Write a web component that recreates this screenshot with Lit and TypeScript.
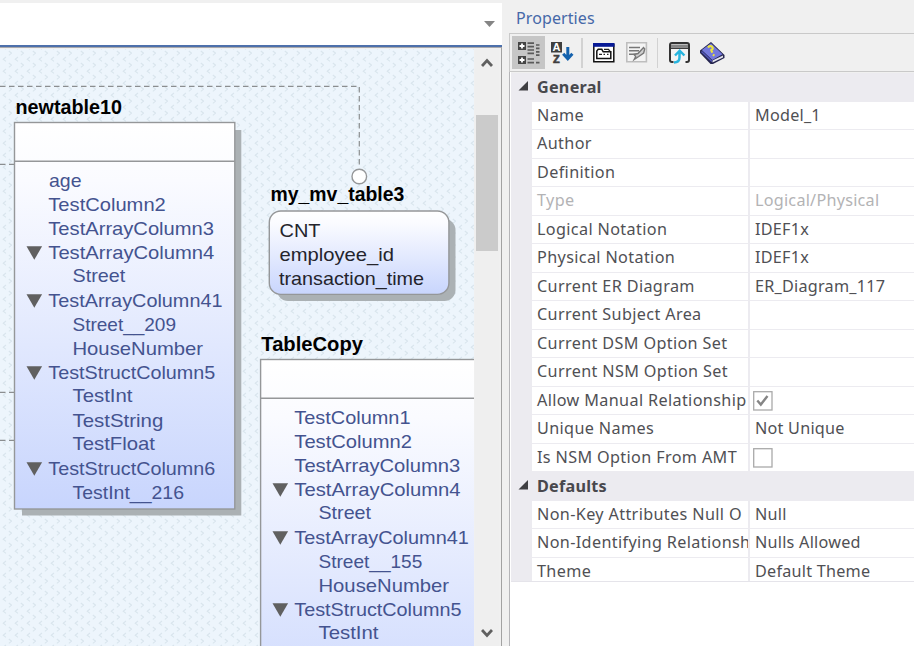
import { LitElement, html, svg, css, nothing } from "lit";
import { customElement, property } from "lit/decorators.js";

type Line = { text: string; x: number; y: number; end: number; open?: boolean };

const col = (text: string, x: number, y: number, end: number, open = false): Line => ({ text, x, y, end, open });

const newTable: Line[] = [
  col("age", 49, 186.5, 81.5),
  col("TestColumn2", 48.3, 211.2, 165.8),
  col("TestArrayColumn3", 48.3, 235.3, 214),
  col("TestArrayColumn4", 48.3, 259.3, 214.3, true),
  col("Street", 72.5, 281.8, 125.2),
  col("TestArrayColumn41", 48.3, 307.3, 222.5, true),
  col("Street__209", 72.5, 331, 176),
  col("HouseNumber", 72.5, 355.3, 203),
  col("TestStructColumn5", 48.3, 379.3, 215.3, true),
  col("TestInt", 72.5, 401.8, 132.5),
  col("TestString", 72.5, 427.3, 163.3),
  col("TestFloat", 72.5, 449.8, 155),
  col("TestStructColumn6", 48.3, 475.3, 215.3, true),
  col("TestInt__216", 72.5, 499.3, 184),
];

const tableCopy: Line[] = [
  col("TestColumn1", 294.3, 424.3, 410.5),
  col("TestColumn2", 294.3, 448.3, 412),
  col("TestArrayColumn3", 294.3, 472.3, 460.3),
  col("TestArrayColumn4", 294.3, 496.3, 460.6, true),
  col("Street", 318.5, 518.8, 371),
  col("TestArrayColumn41", 294.3, 544.3, 468.8, true),
  col("Street__155", 318.5, 568, 422.3),
  col("HouseNumber", 318.5, 592.3, 449),
  col("TestStructColumn5", 294.3, 616.3, 461.5, true),
  col("TestInt", 318.5, 638.8, 378.5),
];

const viewColumns: Line[] = [
  col("CNT", 279.5, 237, 320.5),
  col("employee_id", 279.5, 261.3, 394),
  col("transaction_time", 279, 285, 424),
];

@customElement("er-canvas")
class ErCanvas extends LitElement {
  static styles = css`
    :host { display: block; overflow: hidden; }
    svg { display: block; }
    text { font-family: "Liberation Sans", Arial, sans-serif; font-size: 19px; fill: #44538f; }
    .title { fill: #000; font-weight: bold; font-size: 19.5px; }
    .view { fill: #24242c; }
    .frame { fill: none; stroke: #959799; stroke-width: 1.4; }
    .filled { fill: url(#fill); }
    .white { fill: #fff; }
    .shadow { fill: #abb1b4; }
    .link { fill: none; stroke: #8b8e90; stroke-width: 1.2; stroke-dasharray: 5.5 3.5; }
    .arrow { fill: #606060; }
    .chevron { fill: none; stroke: #d9e5ed; stroke-width: 1.1; }
  `;

  line(l: Line, cls = "") {
    return svg`
      ${l.open ? svg`<path class="arrow" d="M${l.x - 21.8} ${l.y - 13}h15.6l-7.8 13.5z"/>` : nothing}
      <text class=${cls} x=${l.x} y=${l.y} textLength=${l.end - l.x} lengthAdjust="spacingAndGlyphs">${l.text}</text>`;
  }

  render() {
    return html`<svg width="474" height="597" viewBox="0 49 474 597">
      <defs>
        <pattern id="weave" width="12" height="12" patternUnits="userSpaceOnUse">
          <path class="chevron" d="M8.8 3l2.800 2.200l-2.800 2.200M6 9l-2.800 2.200l2.800 2.200M6 -3l-2.800 2.200l2.800 2.200"/>
        </pattern>
        <linearGradient id="fill" x1="0" y1="0" x2="0" y2="1">
          <stop offset="0" stop-color="#ffffff"/><stop offset=".15" stop-color="#fafbff"/><stop offset="1" stop-color="#c8d5fd"/>
        </linearGradient>
      </defs>
      <rect y="49" width="474" height="597" fill="#edf5fc"/>
      <rect y="49" width="474" height="597" fill="url(#weave)"/>
      <path class="link" d="M0 86.3H359.3V168M0 164.3H14M0 392.3H14M0 440.3H14"/>
      <circle class="frame white" cx="359.3" cy="176.5" r="7.3"/>

      <rect class="shadow" x="22" y="130" width="219.3" height="385.5"/>
      <rect class="frame filled" x="14.5" y="122.5" width="220.3" height="386.5"/>
      <path class="frame" d="M14.5 161.2H234.8"/>
      ${this.line(col("newtable10", 15.5, 114, 122), "title")}
      ${newTable.map((l) => this.line(l))}

      <rect class="shadow" x="277" y="219" width="178.5" height="82" rx="11"/>
      <rect class="frame filled" x="269.3" y="211" width="179.6" height="83.4" rx="11.5"/>
      ${this.line(col("my_mv_table3", 270.5, 200.8, 404.3), "title")}
      ${viewColumns.map((l) => this.line(l, "view"))}

      <rect class="frame filled" x="260.6" y="359.5" width="220" height="386"/>
      <path class="frame" d="M260.6 398.3H480"/>
      ${this.line(col("TableCopy", 261.3, 350.8, 363), "title")}
      ${tableCopy.map((l) => this.line(l))}
    </svg>`;
  }
}

type Prop = { name: string; value?: string; check?: boolean; dim?: boolean };

const general: Prop[] = [
  { name: "Name", value: "Model_1" },
  { name: "Author" },
  { name: "Definition" },
  { name: "Type", value: "Logical/Physical", dim: true },
  { name: "Logical Notation", value: "IDEF1x" },
  { name: "Physical Notation", value: "IDEF1x" },
  { name: "Current ER Diagram", value: "ER_Diagram_117" },
  { name: "Current Subject Area" },
  { name: "Current DSM Option Set" },
  { name: "Current NSM Option Set" },
  { name: "Allow Manual Relationship", check: true },
  { name: "Unique Names", value: "Not Unique" },
  { name: "Is NSM Option From AMT", check: false },
];

const defaults: Prop[] = [
  { name: "Non-Key Attributes Null O", value: "Null" },
  { name: "Non-Identifying Relationsh", value: "Nulls Allowed" },
  { name: "Theme", value: "Default Theme" },
];

@customElement("property-group")
class PropertyGroup extends LitElement {
  @property() label = "";
  @property({ attribute: false }) items: Prop[] = [];

  static styles = css`
    :host { display: block; font: 16.2px/28.5px "Noto Sans", "Open Sans", sans-serif; color: #505054; letter-spacing: 0.24px; }
    .head { display: flex; height: 28.5px; background: #ecebf0; font-weight: 700; color: #48484d; }
    .mark { width: 26px; height: 28.5px; flex: none; }
    .row { display: grid; grid-template-columns: 216px 1fr; column-gap: 2px; height: 28.5px; padding-left: 21px; background: #ecebf0; }
    .cell { background: #fff; border-bottom: 1.5px solid #ecebf0; box-sizing: border-box; height: 28.5px; padding-left: 5px; overflow: hidden; white-space: nowrap; line-height: 27.5px; }
    .name { letter-spacing: 0.36px; }
    .dim { color: #b3b3b5; }
    .box { display: block; margin: 4px 0 0 -2px; }
  `;

  render() {
    return html`
      <div class="head">
        <svg class="mark" viewBox="0 0 26 28.5"><path d="M7.5 17.5h9.500v-9.500z" fill="#3f3f42"/></svg>
        <span>${this.label}</span>
      </div>
      ${this.items.map((p) => html`
        <div class="row ${p.dim ? "dim" : ""}">
          <div class="cell name">${p.name}</div>
          <div class="cell">${p.check === undefined ? p.value ?? nothing : html`
            <svg class="box" width="20" height="20" viewBox="0 0 20 20">
              <rect x=".7" y=".7" width="18.300" height="18.300" fill="#fff" stroke="#aaa" stroke-width="1.300"/>
              ${p.check ? svg`<path d="M4.300 9.500l3.500 4l6.700-8.500" fill="none" stroke="#858585" stroke-width="2.400"/>` : nothing}
            </svg>`}</div>
        </div>`)}
    `;
  }
}

@customElement("property-toolbar")
class PropertyToolbar extends LitElement {
  static styles = css`
    :host { display: flex; align-items: center; box-sizing: border-box; height: 39px; border: 1.5px solid #c9c9c9; border-right: 0; background: #f0f0f0; padding-left: 2px; }
    .btn { display: grid; place-items: center; width: 33px; height: 33px; }
    .on { background: #c6c6c6; }
    .sep { width: 1.5px; height: 30px; background: #d2d2d2; margin: 0 5px 0 3px; }
    .az { font: 700 11px "Liberation Sans", sans-serif; }
    svg { overflow: visible; }
  `;

  render() {
    return html`
      <div class="btn on"><svg width="22" height="22" viewBox="0 0 22 22">
        <path fill="#454545" d="M0 0h8v8H0zM0 14h8v8H0z"/>
        <path stroke="#fff" stroke-width="1.8" d="M1.500 4h5M4 1.500v5M1.500 18h5M4 15.500v5"/>
        <path stroke="#5a5a5a" stroke-width="1.700" d="M9.500 1.200h6.500M9.500 4.600h6.500M9.500 8h6.500M9.500 11.400h6.500M9.500 17h6.500M9.500 20.700h6.500"/>
        <path stroke="#5a5a5a" stroke-width="1.700" d="M18 3h3.500M18 6.400h3.500M18 9.800h3.500M18 13.200h3.500M18 20.700h3.500"/>
      </svg></div>
      <div class="btn"><svg width="22" height="22" viewBox="0 0 22 22">
        <path fill="#3f3f3f" d="M0 0h11v10.500H0z"/>
        <text class="az" x="1.500" y="9.200" fill="#fff">A</text>
        <text class="az" x="2" y="21.300" fill="#3f3f3f" stroke="#3f3f3f" stroke-width=".6">Z</text>
        <path fill="none" stroke="#1562ad" stroke-width="3" d="M16.800 5v12M12.200 11.700l4.600 5l4.600-5"/>
      </svg></div>
      <i class="sep"></i>
      <div class="btn"><svg width="22" height="20" viewBox="0 0 22 20">
        <path fill="#fff" stroke="#111" stroke-width="1.500" d="M.8 1.500h20v17.200H.8z"/>
        <path fill="#071a96" d="M0 0h21.500v3.800H0z"/>
        <path fill="#fff" stroke="#111" stroke-width="1.500" d="M3.800 15.500V8l1.400-1.700h3.600L10.200 8.800h7.600v6.700z"/>
        <path fill="none" stroke="#222" stroke-width="1.300" d="M11 6.300h4.500l1.500 2M6 11.300h3M10.500 11.300h1.500M14 11.300h1.500"/>
      </svg></div>
      <div class="btn"><svg width="22" height="21" viewBox="0 0 22 21">
        <path fill="#f4f4f4" stroke="#bebebe" stroke-width="1.600" d="M.8.8h19.600v19H.8z"/>
        <path stroke="#777" stroke-width="1.600" d="M3 5.500h11M3 8.800h10M3 12.200h8"/>
        <path fill="#d0d0d0" stroke="#777" stroke-width="1.400" d="M8 12.500l4-1l5.500-6l1.200 1.500l-1 4l-5 3.500l-4.500 3l1.500-3z"/>
      </svg></div>
      <i class="sep"></i>
      <div class="btn"><svg width="22" height="22" viewBox="0 0 22 22">
        <rect x="1" y="1" width="19" height="19" rx="2" fill="#f3f3f3" stroke="#333" stroke-width="2"/>
        <path fill="#858585" d="M2 2.500h17v3H2z"/>
        <path stroke="#333" stroke-width="1.300" d="M1 6.300h19"/>
        <path fill="#f3f3f3" d="M4.500 17.500h12v4.500h-12z"/>
        <path fill="none" stroke="#27b5df" stroke-width="2.500" d="M5 20.500q5.500 0 5.500-5V9.500M6 13.500l4.700-4.800l4.700 4.800"/>
      </svg></div>
      <div class="btn"><svg width="25" height="22" viewBox="0 0 25 22">
        <path fill="#25254f" d="M0 8.500L11 0l13.500 13v3L13 22h-2.500L0 11z"/>
        <path fill="#7479dc" d="M1.800 8L11 1.200l11.500 11L12.300 18z"/>
        <path fill="#e5e5ee" d="M12.500 18.600l10.500-5.200v2l-10.500 5z"/>
        <path fill="none" stroke="#5055b8" stroke-width="1.500" d="M1.500 9.500l10.500 10"/>
        <path fill="none" stroke="#ede53c" stroke-width="2.200" d="M8 5.500q2-2.500 4-.8q1.800 2-.7 3.500l1 2.500M13 12.500l1.300 1.300"/>
      </svg></div>
    `;
  }
}

@customElement("app-root")
class AppRoot extends LitElement {
  static styles = css`
    :host { display: flex; width: 914px; height: 646px; overflow: hidden; background: #f0f0f0; }
    .left { width: 502px; display: flex; flex-direction: column; padding-top: 3px; box-sizing: border-box; flex: none; }
    .combo { height: 42px; background: #fff; display: flex; align-items: center; justify-content: flex-end; padding-right: 7px; box-sizing: border-box; }
    .rule { height: 2px; background: #4d70ab; width: 502px; }
    .work { display: flex; height: 599px; box-sizing: border-box; border-top: 1px solid #a9a9ac; border-right: 1.5px solid #a2a2a2; padding-top: 1px; }
    .scroll { width: 24px; margin-left: 1px; display: flex; flex-direction: column; background: #efefef; padding: 8px 1px 7px; box-sizing: border-box; align-items: center; }
    .thumb { width: 22px; height: 136px; background: #cbcbcb; margin-top: 47px; }
    .down { margin-top: auto; }
    .panel { margin-left: 7px; flex: 1; display: flex; flex-direction: column; min-width: 0; }
    .title { height: 33px; box-sizing: border-box; padding: 5px 0 0 7px; font: 16px/26px "Noto Sans", "Open Sans", sans-serif; letter-spacing: 0.1px; color: #4568a8; }
    .grid { flex: 1; border-left: 1.5px solid #b5b5b8; background: #fff; min-height: 0; }
    .rows { height: 509.5px; overflow: hidden; border-bottom: 1px solid #e5e4ea; margin-left: 1px; border-top: 1px solid #f0f0f0; box-sizing: border-box; }
  `;

  render() {
    return html`
      <div class="left">
        <div class="combo"><svg width="11" height="6" viewBox="0 0 11 6"><path d="M0 0h11L5.500 6z" fill="#858585"/></svg></div>
        <div class="rule"></div>
        <div class="work">
          <er-canvas></er-canvas>
          <div class="scroll">
            <svg width="12" height="11" viewBox="0 0 12 11"><path d="M1 9l5-5.500l5 5.500" fill="none" stroke="#606060" stroke-width="2.800"/></svg>
            <div class="thumb"></div>
            <svg class="down" width="12" height="11" viewBox="0 0 12 11"><path d="M1 2l5 5.500l5-5.500" fill="none" stroke="#606060" stroke-width="2.800"/></svg>
          </div>
        </div>
      </div>
      <div class="panel">
        <div class="title">Properties</div>
        <property-toolbar></property-toolbar>
        <div class="grid"><div class="rows">
          <property-group label="General" .items=${general}></property-group>
          <property-group label="Defaults" .items=${defaults}></property-group>
        </div></div>
      </div>
    `;
  }
}
